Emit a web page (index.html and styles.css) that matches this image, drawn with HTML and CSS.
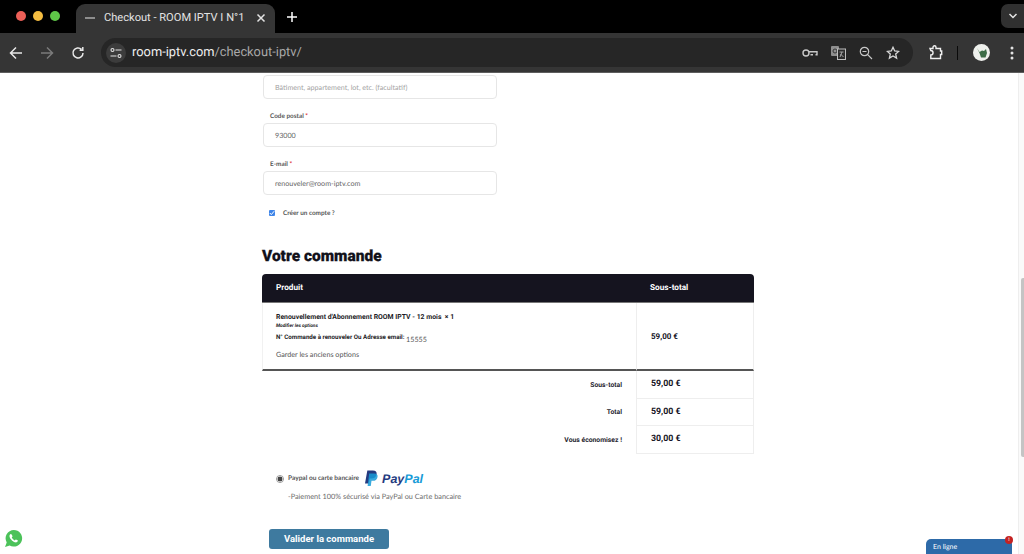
FILE: index.html
```html
<!DOCTYPE html>
<html lang="fr">
<head>
<meta charset="utf-8">
<title>Checkout - ROOM IPTV</title>
<link rel="stylesheet" href="styles.css">
</head>
<body>
<div class="browser">
  <header class="tabstrip">
    <div class="lights"><i class="light red"></i><i class="light yellow"></i><i class="light green"></i></div>
    <div class="tab">
      <span class="favicon"></span>
      <span class="tab-title">Checkout - ROOM IPTV I N°1</span>
      <svg class="tab-close" width="10" height="10" viewBox="0 0 10 10"><path d="M1.500 1.500l7 7M8.500 1.500l-7 7" stroke="#e3e3e3" stroke-width="1.500" fill="none"/></svg>
    </div>
    <svg class="new-tab" width="12" height="12" viewBox="0 0 12 12"><path d="M6 1v10M1 6h10" stroke="#fff" stroke-width="1.500" fill="none"/></svg>
    <div class="tab-menu"><svg width="10" height="6" viewBox="0 0 10 6"><path d="M1.500 1l3.500 3.500L8.500 1" stroke="#e3e3e3" stroke-width="1.500" fill="none"/></svg></div>
  </header>
  <nav class="toolbar">
    <svg class="nav-icon" width="14" height="14" viewBox="0 0 14 14"><path d="M13 7H2M7 1.500L1.500 7 7 12.500" stroke="#e8e8e8" stroke-width="1.500" fill="none"/></svg>
    <svg class="nav-icon" width="14" height="14" viewBox="0 0 14 14"><path d="M1 7h11M7 1.500L12.500 7 7 12.500" stroke="#7b7b7b" stroke-width="1.500" fill="none"/></svg>
    <svg class="nav-icon" width="14" height="14" viewBox="0 0 14 14"><path d="M12 7a5 5 0 1 1-1.500-3.600M11.800 1v3.200H8.600" stroke="#e8e8e8" stroke-width="1.500" fill="none"/></svg>
    <div class="omnibox">
      <span class="site-chip"><svg width="12" height="12" viewBox="0 0 12 12"><g stroke="#e3e3e3" stroke-width="1.100" fill="none"><circle cx="2.500" cy="3" r="1.500"/><path d="M5.500 3H11.500M.5 9H6.500"/><circle cx="9.500" cy="9" r="1.500"/></g></svg></span>
      <span class="url"><b>room-iptv.com</b>/checkout-iptv/</span>
      <span class="omni-icons">
        <svg width="16" height="10" viewBox="0 0 16 10"><g stroke="#c8c8c8" stroke-width="1.400" fill="none"><circle cx="4" cy="5" r="3"/><path d="M7 3.800h8v3h-1.500M11 6.800h-2.500"/></g></svg>
        <svg width="15" height="14" viewBox="0 0 15 14"><rect x="0" y="0" width="8" height="10" rx="1" fill="#8e8e8e"/><circle cx="4" cy="5" r="2" stroke="#353535" fill="none"/><rect x="6.500" y="3" width="8" height="10.500" fill="#2c2c2c" stroke="#bdbdbd"/><path d="M8.500 6h4M11 6l-2 5M9.500 8l3 3" stroke="#bdbdbd" stroke-width=".8" fill="none"/></svg>
        <svg width="14" height="14" viewBox="0 0 14 14"><g stroke="#c8c8c8" stroke-width="1.200" fill="none"><circle cx="5.500" cy="5.500" r="4.200"/><path d="M8.700 8.700L13 13M3.500 5.500h4"/></g></svg>
        <svg width="14" height="14" viewBox="0 0 14 14"><path d="M7 1.300l1.700 3.700 4 .4-3 2.700.9 4L7 10l-3.600 2.100.9-4-3-2.700 4-.4z" stroke="#d8d8d8" stroke-width="1.300" fill="none"/></svg>
      </span>
    </div>
    <svg class="ext" width="15" height="15" viewBox="0 0 15 15"><path d="M2 3.500h3V2.200a1.500 1.500 0 0 1 3 0V3.500h4.500V6h1.200v3.500h-1.200v4H2.800V10a1.500 1.500 0 0 0 0-4.500z" stroke="#f0f0f0" stroke-width="1.400" fill="none"/></svg>
    <i class="divider"></i>
    <span class="avatar"><svg width="12" height="12" viewBox="0 0 12 12"><path d="M1 1l2.500 4L6 3.500 8 4l2-2 1 4-1.500 4.500H5L3.500 6z" fill="#3d6d47"/></svg></span>
    <svg class="kebab" width="4" height="14" viewBox="0 0 4 14"><g fill="#e3e3e3"><circle cx="2" cy="2" r="1.500"/><circle cx="2" cy="7" r="1.500"/><circle cx="2" cy="12" r="1.500"/></g></svg>
  </nav>

  <main class="page">
    <div class="content">
      <section class="fields">
        <div class="input placeholder">Bâtiment, appartement, lot, etc. (facultatif)</div>
        <label class="field-label">Code postal <em>*</em></label>
        <div class="input">93000</div>
        <label class="field-label">E-mail <em>*</em></label>
        <div class="input">renouveler@room-iptv.com</div>
        <div class="account">
          <span class="checkbox"><svg width="6" height="6" viewBox="0 0 6 6"><path d="M.8 3l1.500 1.600L5.200 1.200" stroke="#fff" stroke-width="1" fill="none"/></svg></span>
          <span>Créer un compte ?</span>
        </div>
      </section>

      <h2 class="order-title">Votre commande</h2>

      <table class="order">
        <thead>
          <tr><th class="col-a">Produit</th><th class="col-b">Sous-total</th></tr>
        </thead>
        <tbody>
          <tr class="item">
            <td class="col-a">
              <div class="product">Renouvellement d'Abonnement ROOM IPTV - 12 mois &nbsp;× 1</div>
              <div class="modify">Modifier les options</div>
              <div class="order-no"><b>N° Commande à renouveler Ou Adresse email:</b> <span class="order-val">15555</span></div>
              <div class="keep">Garder les anciens options</div>
            </td>
            <td class="col-b price-sm">59,00 €</td>
          </tr>
        </tbody>
        <tfoot>
          <tr><th>Sous-total</th><td>59,00 €</td></tr>
          <tr><th>Total</th><td>59,00 €</td></tr>
          <tr><th>Vous économisez !</th><td>30,00 €</td></tr>
        </tfoot>
      </table>

      <section class="payment">
        <div class="pay-row">
          <span class="radio"></span>
          <span class="pay-label">Paypal ou carte bancaire</span>
          <span class="paypal">
            <svg width="13" height="17" viewBox="0 0 14 17"><path d="M2.500 0h6c3 0 4.500 1.500 4 4-.5 3-2.500 4.500-5.500 4.500H5L4 14H0z" fill="#253b80"/><path d="M4.500 3h5.500c2.500 0 4 1.300 3.500 3.800-.5 2.700-2.500 4.200-5 4.200H7l-.8 5.500H2.800z" fill="#179bd7" opacity=".85"/></svg>
            <span class="pp-text"><span class="pp-dark">Pay</span><span class="pp-light">Pal</span></span>
          </span>
        </div>
        <p class="pay-note">-Paiement 100% sécurisé via PayPal ou Carte bancaire</p>
      </section>

      <button class="submit" type="button">Valider la commande</button>
    </div>
    <div class="scrollbar"><i class="thumb"></i></div>

    <svg class="whatsapp" width="19" height="19" viewBox="0 0 19 19"><path d="M9.800 1a8.300 8.300 0 0 0-7.100 12.500L1 18l4.700-1.500A8.300 8.300 0 1 0 9.800 1z" fill="#4cc25a"/><path d="M6.800 5c-.5 0-1.500 1-1.300 2.500.3 2 2.800 5 5.500 5.800 1.500.4 2.800-.5 3-1.500.1-.5-1.800-1.500-2.200-1.400-.4.100-.7 1-1.100 1-.6 0-2.700-1.800-3-2.800 0-.4.800-.8.800-1.200 0-.4-.9-2.400-1.700-2.400z" fill="#fff"/></svg>
    <div class="chat">En ligne<span class="chat-badge">!</span></div>
  </main>
</div>
</body>
</html>
```
FILE: styles.css
```css
* { box-sizing: border-box; }
html, body { margin: 0; height: 100%; overflow: hidden; background: #fff; }
body { font-family: "Lato", "Liberation Sans", sans-serif; text-rendering: geometricPrecision; }
.browser { width: 1024px; height: 554px; display: flex; flex-direction: column; overflow: hidden; opacity: .999; }

.tabstrip { height: 33px; background: #000; display: flex; align-items: flex-end; flex: none; }
.lights { display: flex; gap: 7px; padding: 0 0 12px 16px; width: 76px; flex: none; }
.light { width: 10px; height: 10px; border-radius: 50%; }
.red { background: #ec5f57; }
.yellow { background: #f5bd41; }
.green { background: #5fc648; }
.tab { width: 199px; height: 29px; background: #353535; border-radius: 9px 9px 0 0; display: flex; align-items: center; padding: 0 9px 2px 9px; color: #e3e3e3; font: 11.100px "Roboto", "Liberation Sans", sans-serif; white-space: nowrap; }
.favicon { width: 10px; height: 2px; background: #8d8d8d; flex: none; margin-right: 9px; }
.tab-title { flex: 1; }
.tab-close { flex: none; }
.new-tab { margin: 0 0 10px 11px; }
.tab-menu { margin: 0 0 5px auto; width: 23px; height: 24px; background: #303030; border-radius: 7px 0 0 7px; display: flex; align-items: center; justify-content: center; }

.toolbar { height: 40px; flex: none; background: #353535; border-bottom: 1px solid #5e5e5e; display: flex; align-items: center; padding: 0 10px 0 9px; }
.nav-icon { flex: none; margin-right: 17px; }
.nav-icon:nth-child(3) { margin-right: 16px; }
.omnibox { width: 812px; height: 29px; border-radius: 15px; background: #262626; display: flex; align-items: center; padding: 0 13px 0 5px; }
.site-chip { width: 20px; height: 20px; border-radius: 50%; background: #3c3c3c; display: flex; align-items: center; justify-content: center; flex: none; }
.url { margin-left: 6px; font: 12.850px "Roboto", "Liberation Sans", sans-serif; color: #a9a9a9; }
.url b { font-weight: 400; color: #f0f0f0; }
.omni-icons { margin-left: auto; display: flex; align-items: center; gap: 13px; }
.ext { flex: none; margin-left: 15px; }
.divider { width: 1px; height: 14px; background: #0a0a0a; margin-left: 14px; flex: none; }
.avatar { width: 17px; height: 17px; border-radius: 50%; background: #eef0ec; margin-left: 15px; display: flex; align-items: center; justify-content: center; flex: none; }
.kebab { margin-left: 20px; flex: none; }

.page { flex: 1; position: relative; overflow: hidden; background: #fff; }
.content { padding: 2px 0 0 262px; }
.fields { width: 234px; margin-left: 1px; }
.input { height: 24px; border: 1px solid #e6e6e6; border-radius: 4px; padding: 0 11px; display: flex; align-items: center; font-size: 7.150px; color: #666; }
.placeholder { color: #a3a3a3; }
.field-label { display: block; font-size: 6.400px; font-weight: 700; color: #555; margin: 13px 0 2px 7px; height: 9px; line-height: 9px; }
.field-label em { color: #d33; font-style: normal; }
.account { display: flex; align-items: center; margin: 13px 0 0 6px; height: 10px; font-size: 6.400px; font-weight: 700; color: #555; }
.checkbox { width: 6px; height: 6px; background: #3f85e8; border-radius: 1px; margin-right: 8px; display: flex; align-items: center; justify-content: center; }

.order-title { font: 900 15.500px/20px "Roboto", "Liberation Sans", sans-serif; color: #12111a; margin: 28px 0 8px; -webkit-text-stroke: .25px #12111a; }

.order { width: 492px; border-collapse: separate; border-spacing: 0; font-family: "Roboto", "Liberation Sans", sans-serif; }
.col-a { width: 374px; }
.order thead th { background: #15141f; color: #fff; font-size: 8.200px; font-weight: 700; height: 29px; padding: 0 14px; text-align: left; border-bottom: 1px solid #777; }
.order thead th:first-child { border-radius: 4px 0 0 0; }
.order thead th:last-child { border-radius: 0 4px 0 0; }
.item td { height: 68px; border-bottom: 2px solid #555; padding: 0 14px; }
.item td.col-a { border-left: 1px solid #f1f1f1; padding: 0 14px 0 13px; }
.item td.col-b { border-left: 1px solid #eee; border-right: 1px solid #eee; }
.product { font-size: 6.880px; font-weight: 700; color: #1d1d26; line-height: 10px; }
.modify { font-size: 4.800px; font-weight: 700; font-style: italic; color: #1d1d26; margin-top: 2px; line-height: 6px; }
.order-no { margin-top: 1px; font-size: 6.200px; color: #1d1d26; line-height: 12px; }
.order-val { font: 7.200px "Lato", sans-serif; color: #555; position: relative; top: 3px; }
.keep { font: 7.200px "Lato", sans-serif; color: #555; margin-top: 7px; line-height: 10px; }
.price-sm { font-size: 8px; font-weight: 700; color: #15141f; }
.order tfoot th { text-align: right; font-size: 6.800px; font-weight: 700; color: #26252f; padding: 0 14px 0 0; height: 27.500px; border: 0; }
.order tfoot td { font-size: 8.800px; font-weight: 700; color: #15141f; padding: 0 14px; border-left: 1px solid #eee; border-right: 1px solid #eee; border-bottom: 1px solid #eee; height: 27.500px; }

.payment { margin: 16px 0 0 14px; }
.pay-row { display: flex; align-items: center; height: 18px; }
.radio { width: 8px; height: 8px; border-radius: 50%; border: 1px solid #999; background: radial-gradient(circle, #444 0 2.200px, #fff 2.700px); flex: none; margin-right: 4px; }
.pay-label { font-size: 6.550px; font-weight: 700; color: #555; margin-right: 6px; }
.paypal { display: flex; align-items: center; gap: 4px; }
.pp-text { font: italic 700 12.500px "Liberation Sans", sans-serif; }
.pp-dark { color: #253b80; }
.pp-light { color: #179bd7; }
.pay-note { font-size: 7.300px; color: #6b6b6b; margin: 4px 0 0 12px; line-height: 10px; }

.submit { display: block; margin: 27px 0 0 7px; width: 120px; height: 20px; background: #3e7a9f; border: 0; border-radius: 3px; color: #fff; font: 700 9.500px "Roboto", "Liberation Sans", sans-serif; padding: 0; }

.scrollbar { position: absolute; top: 0; right: 0; bottom: 0; width: 6px; background: #fafafa; border-left: 1px solid #eee; }
.thumb { position: absolute; top: 205px; left: 2px; width: 3px; height: 179px; background: #c4c4c4; border-radius: 2px 0 0 2px; }
.whatsapp { position: absolute; left: 4px; bottom: 6px; }
.chat { position: absolute; right: 12px; bottom: 0; width: 86px; height: 15px; background: #2d6aa8; color: #fff; border-radius: 5px 5px 0 0; font-size: 7px; padding: 4px 0 0 7px; line-height: 9px; }
.chat-badge { position: absolute; top: -3px; right: -1px; width: 8px; height: 8px; border-radius: 50%; background: #c42222; color: #fff; font-size: 5px; line-height: 8px; text-align: center; font-weight: 700; }
```
